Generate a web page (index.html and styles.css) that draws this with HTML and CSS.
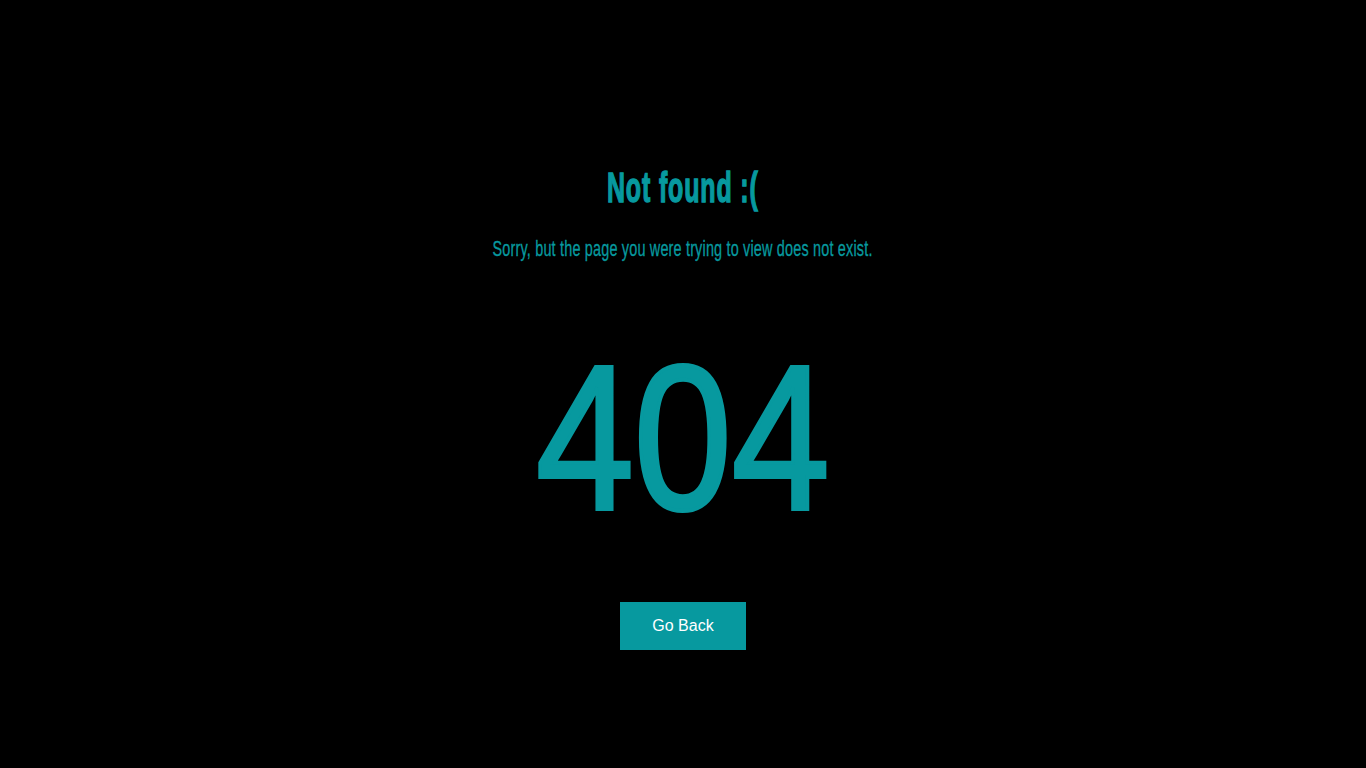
FILE: index.html
```html
<!DOCTYPE html>
<html lang="en">
<head>
<meta charset="utf-8">
<title>Not found</title>
<link rel="stylesheet" href="styles.css">
</head>
<body>
<main class="page">
  <h1 class="title"><span class="stretch">Not found :(</span></h1>
  <p class="lead"><span class="stretch">Sorry, but the page you were trying to view does not exist.</span></p>
  <div class="code"><span class="stretch">404</span></div>
  <a class="btn" href="#">Go Back</a>
</main>
</body>
</html>
```
FILE: styles.css
```css
html, body {
  margin: 0;
  padding: 0;
  background: #000;
  height: 100%;
}
.page {
  display: flex;
  flex-direction: column;
  align-items: center;
  color: #07999f;
  font-family: "Liberation Sans", Arial, sans-serif;
  padding-top: 160px;
}
.stretch {
  display: inline-block;
  white-space: nowrap;
}
.title {
  margin: 0;
  font-size: 43px;
  font-weight: 700;
  line-height: 54px;
}
.title .stretch {
  letter-spacing: 1.5px;
  transform: scaleX(0.58);
  -webkit-text-stroke: 1.5px #07999f;
}
.lead {
  margin: 24px 0 0;
  font-size: 17px;
  line-height: 24px;
}
.lead .stretch {
  letter-spacing: 0.2px;
  transform: scale(0.85, 1.3);
  -webkit-text-stroke: 0.25px #07999f;
}
.code {
  margin-top: 66px;
  font-size: 206px;
  line-height: 220px;
}
.code .stretch {
  transform: scaleX(0.855);
  -webkit-text-stroke: 4px #07999f;
}
.btn {
  margin-top: 54px;
  width: 126px;
  height: 48px;
  display: flex;
  align-items: center;
  justify-content: center;
  background: #07999f;
  color: #fff;
  text-decoration: none;
  font-family: "Liberation Sans", Arial, sans-serif;
  font-size: 16px;
}
```
